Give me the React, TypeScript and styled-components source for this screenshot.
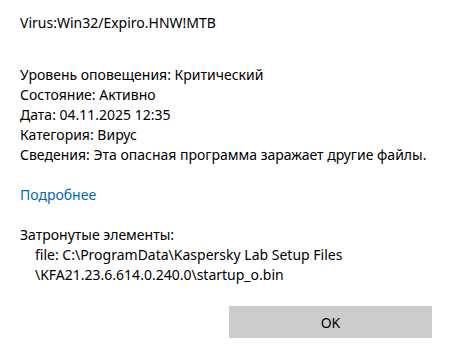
import React from "react";
import styled, { createGlobalStyle } from "styled-components";

const GlobalStyle = createGlobalStyle`
	html, body {
		margin: 0;
		padding: 0;
		background: #ffffff;
	}
	body {
		font-family: "Noto Sans", "Open Sans", sans-serif;
		color: #000000;
	}
`;

const details = [
	{ label: "Уровень оповещения", value: "Критический" },
	{ label: "Состояние", value: "Активно" },
	{ label: "Дата", value: "04.11.2025 12:35" },
	{ label: "Категория", value: "Вирус" },
	{ label: "Сведения", value: "Эта опасная программа заражает другие файлы." },
];

const App = () => {
	return (
		<>
			<GlobalStyle />
			<Dialog>
				<Title>Virus:Win32/Expiro.HNW!MTB</Title>
				<DetailList>
					{details.map((d) => (
						<Line key={d.label}>
							{d.label}: {d.value}
						</Line>
					))}
				</DetailList>
				<MoreLink href="#">Подробнее</MoreLink>
				<Affected>
					<Line>Затронутые элементы:</Line>
					<PathLine>file: C:\ProgramData\Kaspersky Lab Setup Files</PathLine>
					<PathLine>\KFA21.23.6.614.0.240.0\startup_o.bin</PathLine>
				</Affected>
				<Footer>
					<OkButton>OK</OkButton>
				</Footer>
			</Dialog>
		</>
	);
};

export default App;

const Dialog = styled.div`
	width: 454px;
	height: 357px;
	box-sizing: border-box;
	padding: 13px 22px 0 20px;
	display: flex;
	flex-direction: column;
	font-size: 14px;
	line-height: 20px;
`;

const Title = styled.div`
	white-space: nowrap;
`;

const DetailList = styled.div`
	display: flex;
	flex-direction: column;
	margin-top: 32px;
`;

const Line = styled.div`
	white-space: nowrap;
`;

const MoreLink = styled.a`
	display: block;
	margin-top: 20px;
	color: #0067c0;
	text-decoration: none;
	width: fit-content;
`;

const Affected = styled.div`
	display: flex;
	flex-direction: column;
	margin-top: 20px;
`;

const PathLine = styled.div`
	padding-left: 15px;
	white-space: nowrap;
`;

const Footer = styled.div`
	display: flex;
	justify-content: flex-end;
	margin-top: 21px;
`;

const OkButton = styled.button`
	width: 203px;
	height: 32px;
	border: none;
	background: #cccccc;
	font-family: inherit;
	font-size: 14px;
	color: #000000;
	padding: 0;
`;
